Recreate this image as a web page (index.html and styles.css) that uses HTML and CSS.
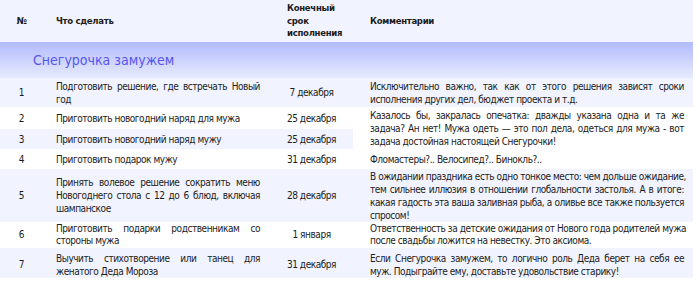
FILE: index.html
```html
<!DOCTYPE html>
<html lang="ru">
<head>
<meta charset="utf-8">
<title>Снегурочка замужем</title>
<link rel="stylesheet" href="styles.css">
</head>
<body>
<table class="plan">
  <colgroup>
    <col class="c-num">
    <col class="c-task">
    <col class="c-date">
    <col class="c-note">
  </colgroup>
  <thead>
    <tr class="head">
      <th class="num">№</th>
      <th class="task">Что сделать</th>
      <th class="date">Конечный срок исполнения</th>
      <th class="note">Комментарии</th>
    </tr>
  </thead>
  <tbody>
    <tr class="section">
      <td colspan="4">Снегурочка замужем</td>
    </tr>
    <tr class="alt h29">
      <td class="num">1</td>
      <td class="task"><span class="ln">Подготовить решение, где встречать Новый</span>год</td>
      <td class="date">7 декабря</td>
      <td class="note"><span class="ln">Исключительно важно, так как от этого решения зависят сроки</span>исполнения других дел, бюджет проекта и т.д.</td>
    </tr>
    <tr class="h22">
      <td class="num">2</td>
      <td class="task">Приготовить новогодний наряд для мужа</td>
      <td class="date">25 декабря</td>
      <td class="note plain" rowspan="2"><span class="ln">Казалось бы, закралась опечатка: дважды указана одна и та же</span><span class="ln">задача? Ан нет! Мужа одеть — это пол дела, одеться для мужа - вот</span>задача достойная настоящей Снегурочки!</td>
    </tr>
    <tr class="alt h20">
      <td class="num">3</td>
      <td class="task">Приготовить новогодний наряд мужу</td>
      <td class="date">25 декабря</td>
    </tr>
    <tr class="h20">
      <td class="num">4</td>
      <td class="task">Приготовить подарок мужу</td>
      <td class="date">31 декабря</td>
      <td class="note">Фломастеры?.. Велосипед?.. Бинокль?..</td>
    </tr>
    <tr class="alt h53">
      <td class="num">5</td>
      <td class="task"><span class="ln">Принять волевое решение сократить меню</span><span class="ln">Новогоднего стола с 12 до 6 блюд, включая</span>шампанское</td>
      <td class="date">28 декабря</td>
      <td class="note"><span class="ln">В ожидании праздника есть одно тонкое место: чем дольше ожидание,</span><span class="ln">тем сильнее иллюзия в отношении глобальности застолья. А в итоге:</span><span class="ln">какая гадость эта ваша заливная рыба, а оливье все также пользуется</span>спросом!</td>
    </tr>
    <tr class="h26 tight">
      <td class="num">6</td>
      <td class="task"><span class="ln">Приготовить подарки родственникам со</span>стороны мужа</td>
      <td class="date">1 января</td>
      <td class="note"><span class="ln">Ответственность за детские ожидания от Нового года родителей мужа</span>после свадьбы ложится на невестку. Это аксиома.</td>
    </tr>
    <tr class="alt h30 low">
      <td class="num">7</td>
      <td class="task"><span class="ln">Выучить стихотворение или танец для</span>женатого Деда Мороза</td>
      <td class="date">31 декабря</td>
      <td class="note"><span class="ln">Если Снегурочка замужем, то логично роль Деда берет на себя ее</span>муж. Подыграйте ему, доставьте удовольствие старику!</td>
    </tr>
  </tbody>
</table>
</body>
</html>
```

FILE: styles.css
```css
html, body {
  margin: 0;
  padding: 0;
  background: #ffffff;
}

.plan {
  width: 693px;
  table-layout: fixed;
  border-collapse: collapse;
  font-family: "DejaVu Sans Condensed", "DejaVu Sans", sans-serif;
  font-size: 10px;
  letter-spacing: -0.45px;
  line-height: 13px;
  color: #1c1c1c;
}

.c-num { width: 40px; }
.c-task { width: 230px; }
.c-date { width: 83px; }
.c-note { width: 340px; }

.plan th,
.plan td {
  padding: 0;
  vertical-align: middle;
}

.head th {
  background: #f1f3fe;
  font-weight: bold;
  font-size: 9.5px;
  letter-spacing: -0.3px;
  line-height: 12.5px;
  text-align: left;
  height: 42px;
}

.plan .num {
  text-align: center;
  padding-left: 3px;
}

.plan .task {
  padding-left: 16px;
  padding-right: 10px;
  text-align: left;
}

.plan .date {
  text-align: center;
}

.head .date {
  text-align: left;
  padding-left: 17px;
}

.plan .note {
  padding-left: 17px;
  padding-right: 9px;
  text-align: left;
}

.ln {
  display: block;
  white-space: nowrap;
  text-align: justify;
  text-align-last: justify;
}

.section td {
  height: 36px;
  padding-left: 33px;
  background: linear-gradient(#b1bbfc, #e8ebfe);
  color: #5656ef;
  font-size: 14px;
  letter-spacing: 0;
}

.h20 { height: 20px; }
.h22 { height: 22px; }
.h26 { height: 26px; }
.h29 { height: 29px; }
.h30 { height: 30px; }
.h53 { height: 53px; }

.tight td { line-height: 12px; }
.low td { padding-top: 3px; }

.alt td {
  background: #f1f3fe;
}

.plan td.plain {
  background: #ffffff;
}
```
